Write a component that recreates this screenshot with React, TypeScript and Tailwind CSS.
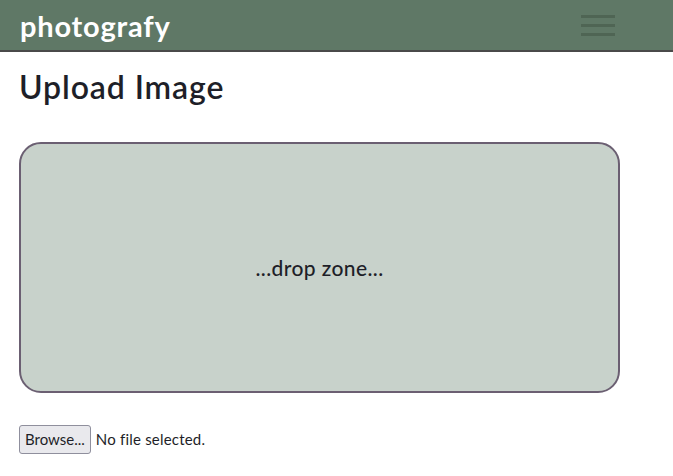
import React from 'react';

export default function App() {
  return (
    <div className="min-h-[476px] bg-white font-['Lato',sans-serif] text-[#1e1f28]">
      <header className="flex h-[52px] items-center justify-between border-b-2 border-[#4a4a4a] bg-[#5f7866] pl-[20px] pr-[58px]">
        <span className="text-[29px] font-bold leading-none tracking-[0.8px] text-white">photografy</span>
        <button className="flex w-[34px] flex-col gap-[6px]">
          <span className="h-[3px] w-full bg-[#4f6554]" />
          <span className="h-[3px] w-full bg-[#4f6554]" />
          <span className="h-[3px] w-full bg-[#4f6554]" />
        </button>
      </header>

      <main className="px-[19px]">
        <h1 className="mt-[16px] text-[32px] font-semibold leading-[38px] tracking-[0.9px]">Upload Image</h1>

        <div className="mt-[36px] flex h-[251px] w-[601px] items-center justify-center rounded-[22px] border-2 border-[#6b5f72] bg-[#c8d2cb]">
          <span className="text-[21px] font-medium tracking-[0.4px]">...drop zone...</span>
        </div>

        <div className="mt-[32px] flex items-center gap-[5px] text-[15px]">
          <button className="h-[29px] rounded-[3px] border border-[#8f8f9d] bg-[#e9e9ed] px-[5px] text-[15px]">Browse...</button>
          <span className="tracking-[0.2px]">No file selected.</span>
        </div>
      </main>
    </div>
  );
}
